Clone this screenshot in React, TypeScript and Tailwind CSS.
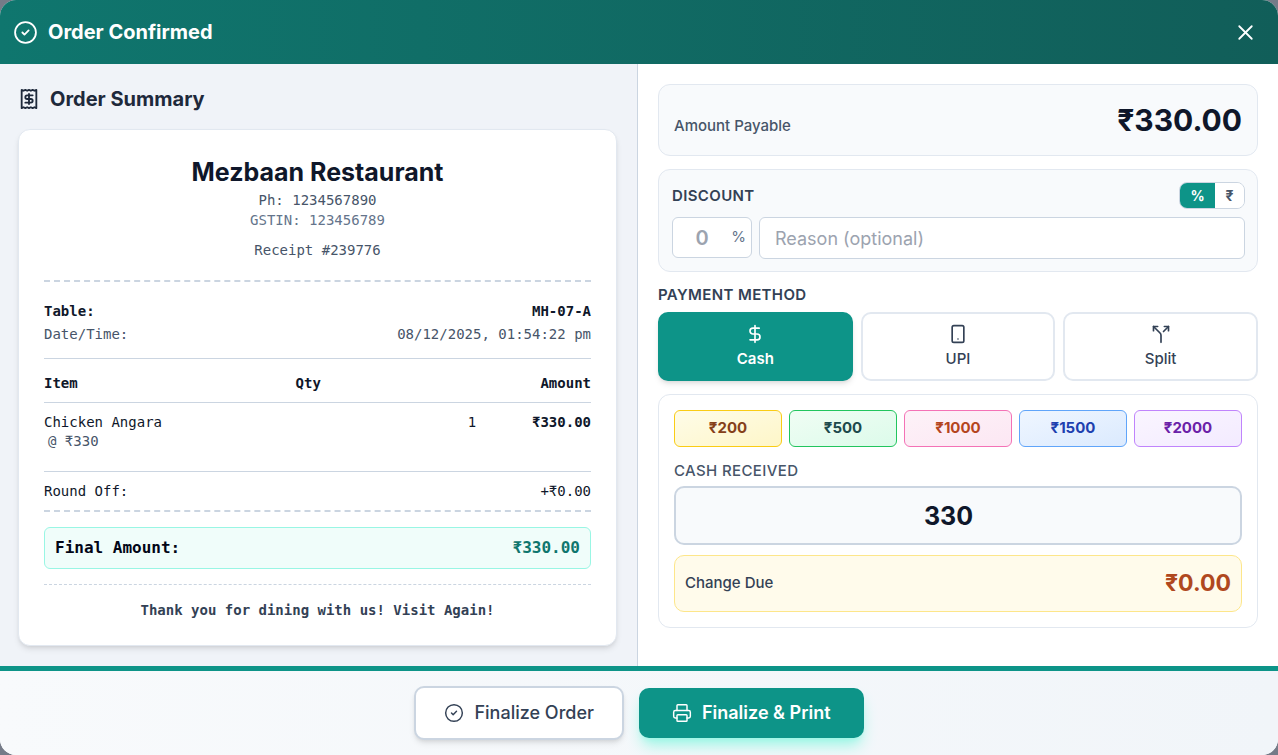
import { useState } from 'react';
import {
  CircleCheck,
  DollarSign,
  Printer,
  Receipt,
  Smartphone,
  Split,
  X,
  type LucideIcon,
} from 'lucide-react';

interface OrderItem {
  name: string;
  price: number;
  quantity: number;
}

interface PaymentMethod {
  id: string;
  label: string;
  icon: LucideIcon;
}

const items: OrderItem[] = [{ name: 'Chicken Angara', price: 330, quantity: 1 }];

const paymentMethods: PaymentMethod[] = [
  { id: 'cash', label: 'Cash', icon: DollarSign },
  { id: 'upi', label: 'UPI', icon: Smartphone },
  { id: 'split', label: 'Split', icon: Split },
];

const quickAmounts = [
  { amount: 200, className: 'border-[#facc15] from-[#fefce8] to-[#fef6c8] text-[#854019]' },
  { amount: 500, className: 'border-[#22c55e] from-[#f0fdf4] to-[#dcfbea] text-[#1d4a4c]' },
  { amount: 1000, className: 'border-[#f472b6] from-[#fdf2f8] to-[#fce7f3] text-[#b5451f]' },
  { amount: 1500, className: 'border-[#60a5fa] from-[#eff6ff] to-[#dbeafe] text-[#1e40af]' },
  { amount: 2000, className: 'border-[#c084fc] from-[#faf5ff] to-[#f3ebff] text-[#6b21a8]' },
];

const Header = () => (
  <header className="flex h-16 items-center justify-between bg-linear-to-r from-[#0f766e] to-[#115e59] px-[13px] text-white">
    <div className="flex items-center gap-[10px]">
      <CircleCheck size={25} strokeWidth={1.75} />
      <h1 className="text-xl font-bold">Order Confirmed</h1>
    </div>
    <button type="button" aria-label="Close" className="mr-[7px] cursor-pointer">
      <X size={25} strokeWidth={1.75} />
    </button>
  </header>
);

const OrderSummary = () => (
  <section className="w-[calc(50%-1px)] border-r border-[#cbd5e1] bg-[#f0f3f8] pt-5 pr-5 pb-5 pl-[18px]">
    <h2 className="mb-[15px] flex items-center gap-[10px] text-xl leading-[30px] font-bold text-[#1e293b]">
      <Receipt size={22} />
      Order Summary
    </h2>

    <div className="rounded-xl border border-[#e2e8f0] bg-white p-[25px] font-['DejaVu_Sans_Mono',monospace] text-sm leading-5 text-[#0f172a] shadow-md">
      <div className="border-b-2 border-dashed border-[#cbd5e1] pb-5 text-center text-[#475569]">
        <h3 className="font-['Inter',sans-serif] text-[25px] leading-[35px] font-bold text-[#0f172a]">
          Mezbaan Restaurant
        </h3>
        <p>Ph: 1234567890</p>
        <p className="text-[#64748b]">GSTIN: 123456789</p>
        <p className="mt-[10px]">Receipt #239776</p>
      </div>

      <div className="mt-[18px] border-b border-[#cbd5e1] pb-3 leading-[23px]">
        <div className="flex justify-between font-bold">
          <span>Table:</span>
          <span>MH-07-A</span>
        </div>
        <div className="flex justify-between text-[#475569]">
          <span>Date/Time:</span>
          <span>08/12/2025, 01:54:22 pm</span>
        </div>
      </div>

      <table className="mt-1 w-full table-fixed border-collapse">
        <thead>
          <tr className="border-b border-[#cbd5e1]">
            <th className="w-[46%] pt-[10px] pb-[9px] text-left">Item</th>
            <th className="w-[33%] pt-[10px] pb-[9px] text-left">Qty</th>
            <th className="pt-[10px] pb-[9px] text-right">Amount</th>
          </tr>
        </thead>
        <tbody>
          {items.map((item) => (
            <tr key={item.name} className="border-b border-[#cbd5e1] align-top">
              <td className="pt-[9px] pb-[21px]">
                <div>{item.name}</div>
                <div className="pl-1 leading-[18px] text-[#475569]">@ ₹{item.price}</div>
              </td>
              <td className="pt-[9px] text-right">{item.quantity}</td>
              <td className="pt-[9px] text-right font-bold">
                ₹{(item.price * item.quantity).toFixed(2)}
              </td>
            </tr>
          ))}
        </tbody>
      </table>

      <div className="flex justify-between border-b-2 border-dashed border-[#cbd5e1] py-[9px]">
        <span>Round Off:</span>
        <span>+₹0.00</span>
      </div>

      <div className="my-[15px] flex justify-between rounded-md border border-[#99f6e4] bg-[#f0fdfa] px-[10px] py-2 text-base leading-6 font-bold text-[#020617]">
        <span>Final Amount:</span>
        <span className="text-[#0f766e]">₹330.00</span>
      </div>

      <p className="border-t border-dashed border-[#cbd5e1] pt-[15px] text-center font-bold text-[#334155]">
        Thank you for dining with us! Visit Again!
      </p>
    </div>
  </section>
);

const DiscountCard = () => {
  const [type, setType] = useState('percent');
  const active = 'bg-[#0d9488] text-white';
  const inactive = 'bg-white text-[#475569]';

  return (
    <div className="mt-[13px] rounded-xl border border-[#e2e8f0] bg-[#f8fafc] py-3 pr-3 pl-[13px]">
      <div className="flex items-center justify-between">
        <h3 className="text-[15px] leading-5 font-semibold tracking-wide text-[#334155]">DISCOUNT</h3>
        <div className="flex overflow-hidden rounded-lg border border-[#cbd5e1] text-sm leading-[25px] font-bold">
          <button
            type="button"
            className={`w-[35px] ${type === 'percent' ? active : inactive}`}
            onClick={() => setType('percent')}
          >
            %
          </button>
          <button
            type="button"
            className={`w-[29px] ${type === 'flat' ? active : inactive}`}
            onClick={() => setType('flat')}
          >
            ₹
          </button>
        </div>
      </div>
      <div className="mt-2 flex items-start gap-[7px]">
        <label className="flex h-[41px] w-20 items-center rounded-md border border-[#cbd5e1] bg-white pr-[5px] text-[15px] text-[#64748b]">
          <input
            type="text"
            placeholder="0"
            aria-label="Discount value"
            className="w-0 flex-1 text-center text-xl font-semibold outline-none placeholder:text-[#9ca3af]"
          />
          %
        </label>
        <input
          type="text"
          placeholder="Reason (optional)"
          aria-label="Discount reason"
          className="h-[42px] min-w-0 flex-1 rounded-md border border-[#cbd5e1] bg-white px-[15px] text-lg outline-none placeholder:text-[#9ca3af]"
        />
      </div>
    </div>
  );
};

const PaymentPanel = () => {
  const [method, setMethod] = useState('cash');
  const [cash, setCash] = useState('330');

  return (
    <section className="flex-1 bg-white p-5">
      <div className="flex items-baseline justify-between rounded-xl border border-[#e2e8f0] bg-[#f8fafc] p-[15px]">
        <span className="text-[15px] font-medium text-[#475569]">Amount Payable</span>
        <span className="text-[30px] leading-10 font-bold text-[#0f172a]">₹330.00</span>
      </div>

      <DiscountCard />

      <h3 className="mt-[13px] mb-[7px] text-[15px] leading-5 font-semibold tracking-wide text-[#334155]">
        PAYMENT METHOD
      </h3>
      <div className="grid grid-cols-3 gap-2">
        {paymentMethods.map(({ id, label, icon: Icon }) => (
          <button
            key={id}
            type="button"
            onClick={() => setMethod(id)}
            className={`flex flex-col items-center gap-1 rounded-[10px] border-2 py-[10px] text-[15px] leading-[21px] ${
              method === id
                ? 'border-[#0d9488] bg-[#0d9488] font-semibold text-white shadow-md'
                : 'border-[#e2e8f0] bg-white font-medium text-[#334155]'
            }`}
          >
            <Icon size={20} />
            {label}
          </button>
        ))}
      </div>

      <div className="mt-[13px] rounded-xl border border-[#e2e8f0] bg-white p-[15px]">
        <div className="grid grid-cols-5 gap-[7px]">
          {quickAmounts.map(({ amount, className }) => (
            <button
              key={amount}
              type="button"
              onClick={() => setCash(String(amount))}
              className={`rounded-md border bg-linear-to-br pt-[7px] pb-2 text-[15px] leading-5 font-bold ${className}`}
            >
              ₹{amount}
            </button>
          ))}
        </div>

        <label
          htmlFor="cash-received"
          className="mt-[14px] mb-[5px] block text-[15px] leading-5 font-medium tracking-wide text-[#475569]"
        >
          CASH RECEIVED
        </label>
        <input
          id="cash-received"
          type="number"
          value={cash}
          onChange={(e) => setCash(e.target.value)}
          className="block h-[59px] w-full rounded-[10px] border-2 border-[#cbd5e1] bg-[#f8fafc] pr-1 text-center text-[25px] font-bold text-[#0f172a] outline-none"
        />

        <div className="mt-[10px] flex h-[57px] items-center justify-between rounded-[10px] border border-[#fde68a] bg-[#fffbeb] px-[10px]">
          <span className="text-[15px] font-medium text-[#334155]">Change Due</span>
          <span className="text-[23px] font-bold text-[#b0481e]">₹0.00</span>
        </div>
      </div>
    </section>
  );
};

const Footer = () => (
  <footer className="flex items-center justify-center gap-[15px] border-t-[5px] border-[#0d9488] bg-linear-to-r from-[#f8fafc] to-[#f1f5f9] py-[15px]">
    <button
      type="button"
      className="flex h-[54px] items-center gap-[10px] rounded-[10px] border-2 border-[#cbd5e1] bg-white px-7 text-lg font-medium text-[#334155] shadow-md"
    >
      <CircleCheck size={20} strokeWidth={1.75} />
      Finalize Order
    </button>
    <button
      type="button"
      className="flex h-[50px] items-center gap-[10px] rounded-[10px] bg-[#0d9488] px-[33px] text-lg font-semibold text-white shadow-lg shadow-[#99f6e4]"
    >
      <Printer size={20} strokeWidth={1.75} />
      Finalize &amp; Print
    </button>
  </footer>
);

const App = () => {
  return (
    <div className="min-h-screen bg-[#757b88] font-['Inter',sans-serif]">
      <div className="flex min-h-screen flex-col overflow-hidden rounded-2xl bg-white">
        <Header />
        <main className="flex flex-1">
          <OrderSummary />
          <PaymentPanel />
        </main>
        <Footer />
      </div>
    </div>
  );
};

export default App;
